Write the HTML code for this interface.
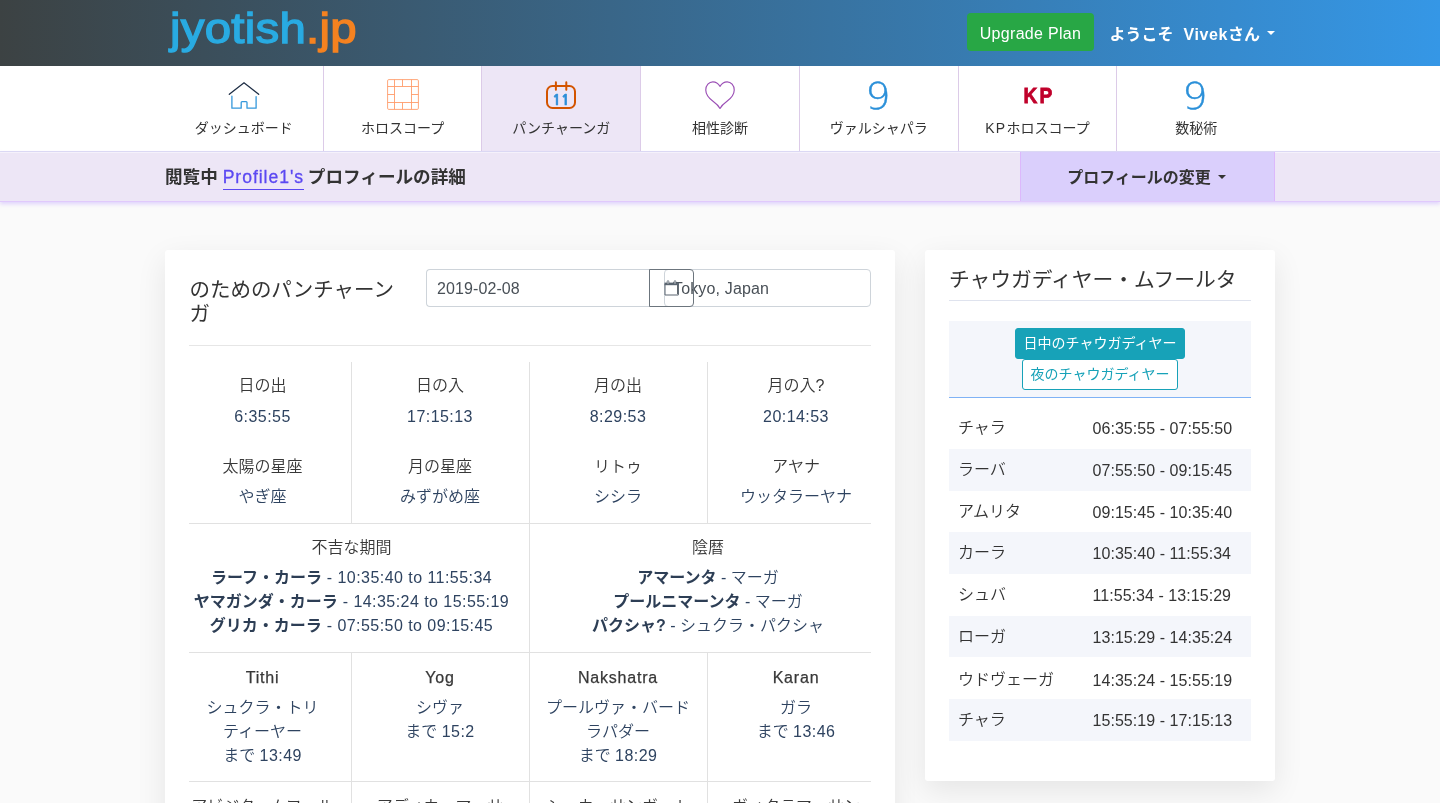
<!DOCTYPE html>
<html lang="ja">
<head>
<meta charset="utf-8">
<title>jyotish.jp</title>
<style>
*{box-sizing:border-box}
html,body{margin:0;padding:0}
body{width:1440px;height:803px;overflow:hidden;background:#fafafa;color:#333;
 font-family:"Liberation Sans","Noto Sans CJK JP",sans-serif;font-size:16px;line-height:1.5}
.wrap{width:1110px;margin:0 auto;position:relative}
/* header */
.hdr{will-change:transform;height:66px;background:linear-gradient(90deg,#3c4243 0%,#3597e6 100%);position:relative}
.logo{position:absolute;left:4.5px;top:-4.2px;height:66px;line-height:66px;font-weight:normal;font-size:41.6px;letter-spacing:.2px;color:#29abe2;-webkit-text-stroke:1.3px #29abe2;transform:scaleX(1.14);transform-origin:0 50%;white-space:nowrap}
.logo b{color:#f58220;font-weight:normal;-webkit-text-stroke:1.3px #f58220}
.upg{position:absolute;left:802px;top:13px;width:127px;height:38px;background:#28a745;border-radius:4px;color:#fff;text-align:center;line-height:41px;font-size:16px;letter-spacing:.3px}
.wel{position:absolute;right:0;top:0;line-height:69px;color:#fff;font-weight:bold;font-size:16px;white-space:nowrap}
.vv{margin-left:5.5px;letter-spacing:.6px}
.caret{display:inline-block;width:0;height:0;border-left:4px solid transparent;border-right:4px solid transparent;border-top:4px solid currentColor;vertical-align:middle;margin-left:6px}
/* nav */
.nav{will-change:transform;height:86px;background:#fff;border-bottom:1px solid #dddcf4}
.nav .wrap{display:flex;height:85px}
.nav .it{flex:1 1 0;border-right:1px solid #dccbe8;text-align:center;position:relative;font-size:14px;color:#333}
.nav .it:last-child{border-right:0}
.nav .it.act{background:#ede6f6}
.nav .it .ic{position:absolute;left:0;right:0;top:12px;height:34px}
.nav .it .lb{position:absolute;left:0;right:0;top:52px;line-height:21px}
.nav svg{display:block;margin:0 auto}
.nine{display:block;font-family:"DejaVu Sans","Liberation Sans",sans-serif;font-weight:200;font-size:38px;line-height:34px;color:#2b90d9;-webkit-text-stroke:.4px #2b90d9;transform:scaleX(1.05);position:relative;top:1px;left:-1px}
.kp{display:block;font-weight:bold;font-size:21.3px;line-height:34px;color:#c0002b;-webkit-text-stroke:.8px #c0002b;transform:scaleX(.9);letter-spacing:2.2px;position:relative;top:1px;left:1px}
/* profile bar */
.pbar{will-change:transform;z-index:2;height:50px;background:#ede6f6;border-top:1px solid #f5f1fb;border-bottom:1px solid #e0c9fc;box-shadow:0 2px 4px rgba(190,160,255,.45);position:relative}
.pbar .t{line-height:48px;font-weight:bold;font-size:17.6px;color:#333}
.pbar .t a{color:#5b48f2;text-decoration:none;border-bottom:1px solid #5b48f2;font-weight:normal;letter-spacing:.95px;-webkit-text-stroke:.3px #5b48f2;margin-right:-1px;padding-bottom:2px}
.pbar .btn{position:absolute;right:0;top:-1px;width:255px;height:49px;background:#dacffc;border-left:1px solid #dcb8fc;border-right:1px solid #dcb8fc;text-align:center;line-height:51.4px;font-weight:bold;font-size:16px;color:#333;padding-right:2px}
/* cards */
.card{will-change:transform;position:absolute;background:#fff;border-radius:3px;box-shadow:0 10px 30px rgba(0,0,0,.085)}

#c1{padding:0}
.ttl{position:absolute;left:24.5px;top:28px;width:208px;font-size:20.48px;line-height:24px;color:#333}
.inp1{position:absolute;left:261px;top:19px;width:239px;height:38px;border:1px solid #ced4da;border-right:0;border-radius:4px 0 0 4px;background:#fff}
.inp1 span{position:absolute;left:10px;top:1px;line-height:36px;color:#495057;font-size:16px;letter-spacing:.1px}
.inp2{position:absolute;left:499px;top:19px;width:207px;height:38px;border:1px solid #ced4da;border-radius:4px;background:#fff}
.inp2 span{position:absolute;left:8px;top:1px;line-height:36px;color:#495057;font-size:16px;letter-spacing:.15px}
.cb{position:absolute;left:484px;top:19px;width:45px;height:38px;border:1px solid #6c757d;border-radius:0 4px 4px 0}
.cb svg{position:absolute;left:14px;top:10px}
.hr1{position:absolute;left:24px;top:95px;width:682px;height:1px;background:#e6e6e6}
.row{position:absolute;left:24px;width:682px;border-bottom:1px solid #e1e1e1}
.cell{position:absolute;top:0;bottom:0;text-align:center;border-right:1px solid #e1e1e1}
.cell.last{border-right:0}
.lb1{color:#383838;font-weight:350;line-height:24px;height:24px;white-space:nowrap}
.v1{color:#2e4360;font-weight:350;line-height:24px;white-space:nowrap}
.dg{letter-spacing:.45px}
.mont{letter-spacing:.8px;-webkit-text-stroke:.25px #383838}
.lb1.wr{white-space:normal;height:auto;padding:0 15px}
b.k{color:#2d3e55}

.t2{position:absolute;left:24px;top:18px;font-size:20.75px;line-height:24px;color:#333;white-space:nowrap}
.hr2{position:absolute;left:24px;top:50px;width:302px;height:1px;background:#dfe3ee}
.bx{position:absolute;left:24px;top:71px;width:302px;height:77px;background:#f4f6fb;border-bottom:1px solid #7fb2f5}
.b1,.b2{position:absolute;height:31px;border-radius:3px;font-size:14px;line-height:29px;text-align:center;border:1px solid #17a2b8}
.b1{left:66px;top:7px;width:170px;background:#17a2b8;color:#fff}
.b2{left:73px;top:38px;width:156px;background:#fff;color:#17a2b8}
.tb{position:absolute;left:24px;top:157.35px;width:302px}
.tb div{height:41.67px;line-height:42.6px;position:relative;color:#333;font-size:16px}
.tb div:nth-child(even){background:#f4f6fb}
.tb div span{position:absolute;left:9px;top:0;font-weight:350}
.tb div em{position:absolute;left:143.5px;top:1px;font-style:normal;letter-spacing:.05px}
</style>
</head>
<body>
<div class="hdr"><div class="wrap" style="height:66px">
 <div class="logo">jyotish<b>.jp</b></div>
 <div class="upg">Upgrade Plan</div>
 <div class="wel">ようこそ <span class="vv">Vivek</span>さん<span class="caret" style="margin-left:7px;position:relative;top:-3px"></span></div>
</div></div>
<div class="nav"><div class="wrap">
 <div class="it"><div class="ic"><svg width="34" height="34" viewBox="227 78 34 34"><path d="M229.3 94.3L244 82.8L258.7 94.3" fill="none" stroke="#1d2d44" stroke-width="1.3" stroke-linecap="round" stroke-linejoin="miter"/><path d="M231.9 96.2V108.2H241.2V102.6Q241.2 101.7 242.1 101.7H246.1Q247 101.7 247 102.6V108.2H256.1V96.6" fill="none" stroke="#3498db" stroke-width="1.3" stroke-linejoin="round" stroke-linecap="round"/></svg></div><div class="lb">ダッシュボード</div></div>
 <div class="it"><div class="ic"><svg width="34" height="34" viewBox="386 78 34 34"><g fill="none" stroke="#ff8a50" stroke-width="0.9" opacity="0.85"><rect x="387.6" y="79.6" width="30.8" height="29.8" rx="1.2"/><path d="M394.5 79.6V109.4M411.5 79.6V109.4M387.6 86.5H418.4M387.6 102.5H418.4M402.5 79.6V86.5M402.5 102.5V109.4M387.6 94.5H394.5M411.5 94.5H418.4"/></g></svg></div><div class="lb">ホロスコープ</div></div>
 <div class="it act"><div class="ic"><svg width="34" height="34" viewBox="544 78 34 34"><rect x="547" y="86" width="28" height="22" rx="5.5" fill="none" stroke="#d35400" stroke-width="2"/><path d="M555.9 82.2V89.8M566.3 82.2V89.8" stroke="#d35400" stroke-width="2" stroke-linecap="round"/><text x="561" y="104.6" text-anchor="middle" style="font-family:'NanumGothic','Liberation Sans',sans-serif;font-weight:bold;font-size:14.5px" fill="#2d8fd8" stroke="#2d8fd8" stroke-width="0.7">11</text></svg></div><div class="lb">パンチャーンガ</div></div>
 <div class="it"><div class="ic"><svg width="34" height="34" viewBox="-2 -3 34 34"><path transform="translate(15,27.5) scale(.955,.972) translate(-15,-27.5)" d="M15 4.7C13 1.5 9.5 0.1 7.5 0.1C3.5 0.1 0.1 3.8 0.1 8.5C0.1 14 4 17.5 8 20.3C11.5 22.8 13.5 24.5 15 27.5C16.5 24.5 18.5 22.8 22 20.3C26 17.5 29.9 14 29.9 8.5C29.9 3.8 26.5 0.1 22.5 0.1C20.5 0.1 17 1.5 15 4.7Z" fill="none" stroke="#9b4fb5" stroke-width="1.2" stroke-linejoin="round"/></svg></div><div class="lb">相性診断</div></div>
 <div class="it"><div class="ic"><span class="nine">9</span></div><div class="lb">ヴァルシャパラ</div></div>
 <div class="it"><div class="ic"><span class="kp">KP</span></div><div class="lb"><span style="letter-spacing:1.4px">KP</span>ホロスコープ</div></div>
 <div class="it"><div class="ic"><span class="nine">9</span></div><div class="lb">数秘術</div></div>
</div></div>
<div class="pbar"><div class="wrap">
 <div class="t">閲覧中 <a>Profile1's</a> プロフィールの詳細</div>
 <div class="btn">プロフィールの変更<span class="caret" style="position:relative;top:-2px;margin-left:7px"></span></div>
</div></div>
<div class="wrap" id="main">
 <div class="card" id="c1" style="left:0;top:48px;width:730px;height:600px"><div class="ttl">のためのパンチャーンガ</div>
<div class="inp1"><span>2019-02-08</span></div><div class="inp2"><span>Tokyo, Japan</span></div>
<div class="cb"><svg width="16" height="17" viewBox="0 0 16 17"><path d="M1 4.2H14.3V15H1Z" fill="none" stroke="#5a6570" stroke-width="1"/><rect x="0.5" y="2.6" width="14.3" height="2.6" fill="#5a6570"/><path d="M3.2 3.6V1.6Q3.2 0.6 4 0.6Q4.8 0.6 4.8 1.6V3.6M10.2 3.6V1.6Q10.2 0.6 11 0.6Q11.8 0.6 11.8 1.6V3.6" fill="#fff" stroke="#5a6570" stroke-width=".8"/></svg></div>
<div class="hr1"></div>
<div class="row" style="top:112px;height:162px;overflow:hidden"><div class="cell" style="left:-15px;width:178px"><div class="lb1" style="margin-top:12px">日の出</div><div class="v1 dg" style="margin-top:7px">6:35:55</div><div class="lb1" style="margin-top:26px">太陽の星座</div><div class="v1" style="margin-top:6px">やぎ座</div></div><div class="cell" style="left:162px;width:179px"><div class="lb1" style="margin-top:12px">日の入</div><div class="v1 dg" style="margin-top:7px">17:15:13</div><div class="lb1" style="margin-top:26px">月の星座</div><div class="v1" style="margin-top:6px">みずがめ座</div></div><div class="cell" style="left:340px;width:179px"><div class="lb1" style="margin-top:12px">月の出</div><div class="v1 dg" style="margin-top:7px">8:29:53</div><div class="lb1" style="margin-top:26px">リトゥ</div><div class="v1" style="margin-top:6px">シシラ</div></div><div class="cell last" style="left:518px;width:178px"><div class="lb1" style="margin-top:12px">月の入?</div><div class="v1 dg" style="margin-top:7px">20:14:53</div><div class="lb1" style="margin-top:26px">アヤナ</div><div class="v1" style="margin-top:6px">ウッタラーヤナ</div></div></div>
<div class="row" style="top:274px;height:129px;overflow:hidden"><div class="cell" style="left:-15px;width:356px"><div class="lb1" style="margin-top:12px">不吉な期間</div><div class="v1" style="margin-top:6px"><b class="k">ラーフ・カーラ</b><span class="dg"> - 10:35:40 to 11:55:34</span></div><div class="v1"><b class="k">ヤマガンダ・カーラ</b><span class="dg"> - 14:35:24 to 15:55:19</span></div><div class="v1"><b class="k">グリカ・カーラ</b><span class="dg"> - 07:55:50 to 09:15:45</span></div></div><div class="cell last" style="left:341px;width:356px"><div class="lb1" style="margin-top:12px">陰暦</div><div class="v1" style="margin-top:6px"><b class="k">アマーンタ</b> - マーガ</div><div class="v1"><b class="k">プールニマーンタ</b> - マーガ</div><div class="v1"><b class="k">パクシャ?</b> - シュクラ・パクシャ</div></div></div>
<div class="row" style="top:403px;height:129px;overflow:hidden"><div class="cell" style="left:-15px;width:178px"><div class="lb1 mont" style="margin-top:13px">Tithi</div><div class="v1" style="margin-top:6px">シュクラ・トリ</div><div class="v1">ティーヤー</div><div class="v1">まで <span class="dg">13:49</span></div></div><div class="cell" style="left:162px;width:179px"><div class="lb1 mont" style="margin-top:13px">Yog</div><div class="v1" style="margin-top:6px">シヴァ</div><div class="v1">まで <span class="dg">15:2</span></div></div><div class="cell" style="left:340px;width:179px"><div class="lb1 mont" style="margin-top:13px">Nakshatra</div><div class="v1" style="margin-top:6px">プールヴァ・バード</div><div class="v1">ラパダー</div><div class="v1">まで <span class="dg">18:29</span></div></div><div class="cell last" style="left:518px;width:178px"><div class="lb1 mont" style="margin-top:13px">Karan</div><div class="v1" style="margin-top:6px">ガラ</div><div class="v1">まで <span class="dg">13:46</span></div></div></div>
<div class="row" style="top:532px;height:129px;overflow:hidden;border-bottom:0"><div class="cell" style="left:-15px;width:178px"><div class="lb1 wr" style="margin-top:12.5px">アビジタ・ムフール<br>タ</div></div><div class="cell" style="left:162px;width:179px"><div class="lb1 wr" style="margin-top:12.5px">アディカ・マーサ</div></div><div class="cell" style="left:340px;width:179px"><div class="lb1 wr" style="margin-top:12.5px">シャカ・サンヴァト</div></div><div class="cell last" style="left:518px;width:178px"><div class="lb1 wr" style="margin-top:12.5px">ヴィクラマ・サン<br>ヴァト</div></div></div>
</div>
 <div class="card" id="c2" style="left:760px;top:48px;width:350px;height:531px"><div class="t2">チャウガディヤー・ムフールタ</div><div class="hr2"></div>
<div class="bx"><div class="b1">日中のチャウガディヤー</div><div class="b2">夜のチャウガディヤー</div></div>
<div class="tb"><div><span>チャラ</span><em>06:35:55 - 07:55:50</em></div><div><span>ラーバ</span><em>07:55:50 - 09:15:45</em></div><div><span>アムリタ</span><em>09:15:45 - 10:35:40</em></div><div><span>カーラ</span><em>10:35:40 - 11:55:34</em></div><div><span>シュバ</span><em>11:55:34 - 13:15:29</em></div><div><span>ローガ</span><em>13:15:29 - 14:35:24</em></div><div><span style="top:1.5px">ウドヴェーガ</span><em style="top:2.5px">14:35:24 - 15:55:19</em></div><div><span>チャラ</span><em>15:55:19 - 17:15:13</em></div></div></div>
</div>
</body>
</html>
